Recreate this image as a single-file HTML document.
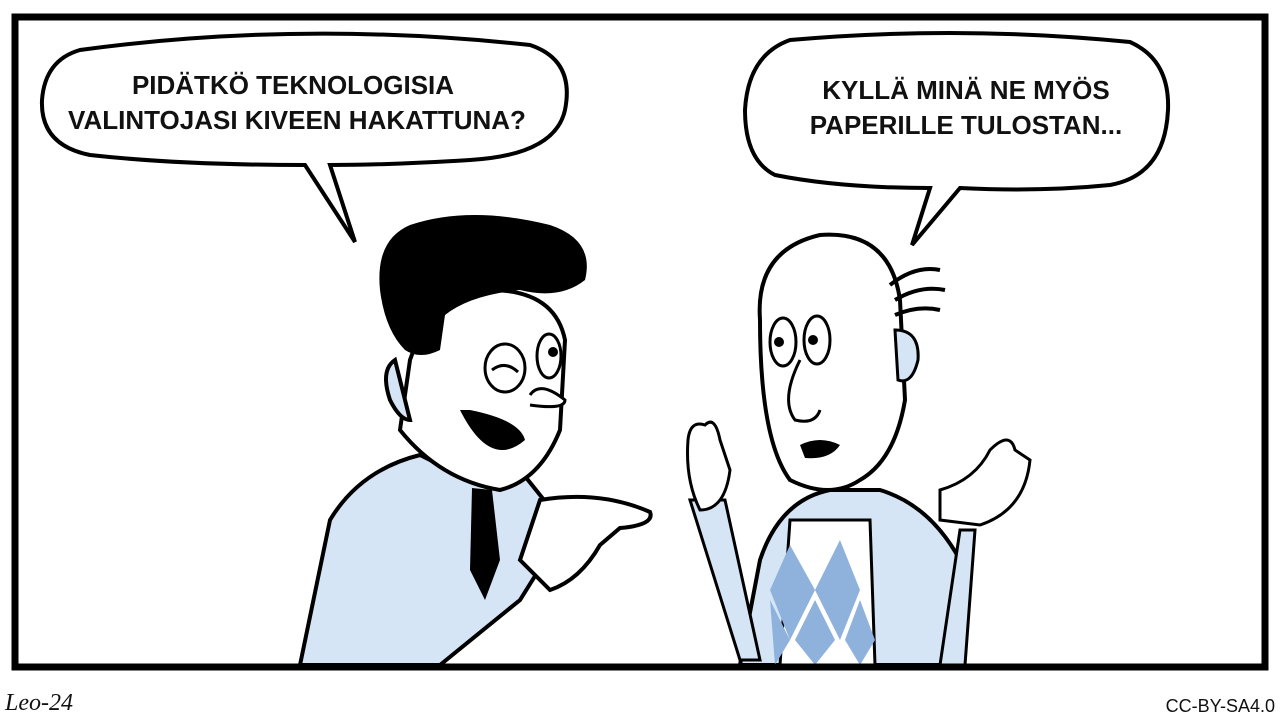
<!DOCTYPE html>
<html><head><meta charset="utf-8"><style>
html,body{margin:0;padding:0;background:#fff;width:1280px;height:720px;overflow:hidden}
svg{display:block}
text{font-family:"Liberation Sans",sans-serif;font-weight:bold;fill:#111}
</style></head><body>
<svg width="1280" height="720" viewBox="0 0 1280 720">
<rect x="0" y="0" width="1280" height="720" fill="#fff"/>
<!-- left character body -->
<path d="M300 665 L330 520 Q360 470 420 455 L470 480 L520 470 L560 520 L545 560 L520 600 L440 665 Z" fill="#d5e5f5" stroke="#000" stroke-width="4"/>
<path d="M540 500 Q600 490 650 512 Q655 525 620 528 L600 545 Q580 580 550 590 L520 560 Z" fill="#fff" stroke="#000" stroke-width="4"/>
<path d="M472 488 L492 490 L500 560 L485 600 L470 570 Z" fill="#000"/>
<path d="M400 430 L410 360 Q430 300 490 290 Q555 290 565 340 L560 430 Q540 480 500 490 Q440 480 400 430 Z" fill="#fff" stroke="#000" stroke-width="4"/>
<path d="M395 360 Q380 370 390 400 Q400 420 410 420 Z" fill="#d5e5f5" stroke="#000" stroke-width="4"/>
<path d="M380 290 Q375 240 410 225 Q470 205 550 225 Q595 240 585 280 Q560 300 520 290 Q470 295 445 315 L440 350 Q420 360 405 350 Q385 330 380 290 Z" fill="#000"/>
<ellipse cx="505" cy="368" rx="20" ry="24" fill="#fff" stroke="#000" stroke-width="3"/>
<ellipse cx="549" cy="356" rx="12" ry="22" fill="#fff" stroke="#000" stroke-width="3"/>
<circle cx="553" cy="352" r="5" fill="#000"/><path d="M492 370 Q505 360 518 372" stroke="#000" stroke-width="3" fill="none"/>
<path d="M460 410 Q490 470 525 440 Q520 420 470 410 Z" fill="#000"/>
<path d="M530 405 Q565 410 565 400 Q540 380 530 395" fill="#fff" stroke="#000" stroke-width="3"/>
<!-- right character -->
<path d="M740 665 L760 560 Q780 500 830 490 L880 490 Q930 505 960 560 L945 665 Z" fill="#d5e5f5" stroke="#000" stroke-width="4"/>
<path d="M790 520 L870 520 L875 665 L780 665 Z" fill="#fff" stroke="#000" stroke-width="3"/>
<path d="M790 545 L815 590 L790 640 L770 590 Z M840 540 L860 590 L840 640 L815 590 Z M815 600 L835 640 L815 665 L795 640 Z M770 600 L790 640 L775 665 Z M860 600 L875 640 L860 665 L845 640 Z" fill="#8eb2db"/>
<path d="M690 500 L740 660 L760 660 L725 500 Z" fill="#d5e5f5" stroke="#000" stroke-width="3"/>
<path d="M960 530 L940 665 L965 665 L975 530 Z" fill="#d5e5f5" stroke="#000" stroke-width="3"/>
<path d="M688 440 Q690 420 705 425 Q715 415 720 440 L730 470 Q725 510 700 510 Q685 480 688 440 Z" fill="#fff" stroke="#000" stroke-width="3"/>
<path d="M940 490 Q975 480 990 450 Q1010 430 1015 450 L1030 460 Q1025 510 980 525 L940 520 Z" fill="#fff" stroke="#000" stroke-width="3"/>
<path d="M760 320 Q755 250 820 235 Q890 230 900 300 L905 400 Q895 460 860 480 Q830 500 790 480 Q760 440 760 320 Z" fill="#fff" stroke="#000" stroke-width="4"/>
<path d="M895 330 Q920 330 918 360 Q912 385 898 380 Z" fill="#d5e5f5" stroke="#000" stroke-width="3"/>
<path d="M890 285 Q915 265 940 270 M895 300 Q920 285 945 290 M895 315 Q918 305 940 310" stroke="#000" stroke-width="4" fill="none"/>
<ellipse cx="783" cy="342" rx="13" ry="24" fill="#fff" stroke="#000" stroke-width="3"/>
<ellipse cx="817" cy="340" rx="13" ry="24" fill="#fff" stroke="#000" stroke-width="3"/>
<circle cx="779" cy="342" r="5" fill="#000"/><circle cx="813" cy="340" r="5" fill="#000"/>
<path d="M800 360 Q780 400 795 420 Q815 425 820 410" stroke="#000" stroke-width="3" fill="none"/>
<path d="M800 445 Q820 435 840 445 Q830 460 805 458 Z" fill="#000"/>
<!-- bubbles -->
<path d="M80 50 Q300 20 530 45 Q575 60 565 110 Q555 155 470 160 Q390 165 330 165 L355 242 L305 165 Q180 165 90 155 Q40 145 42 100 Q45 60 80 50 Z" fill="#fff" stroke="#000" stroke-width="4"/>
<path d="M790 40 Q960 25 1130 42 Q1170 60 1168 110 Q1165 175 1110 185 Q1040 192 960 188 L912 245 L930 188 Q840 188 775 175 Q745 160 745 110 Q748 55 790 40 Z" fill="#fff" stroke="#000" stroke-width="4"/>
<text x="293" y="94" font-size="26" text-anchor="middle">PIDÄTKÖ TEKNOLOGISIA</text>
<text x="297" y="129" font-size="26" text-anchor="middle">VALINTOJASI KIVEEN HAKATTUNA?</text>
<text x="966" y="99" font-size="26" text-anchor="middle">KYLLÄ MINÄ NE MYÖS</text>
<text x="966" y="134" font-size="26" text-anchor="middle">PAPERILLE TULOSTAN...</text>
<!-- frame -->
<rect x="15" y="17" width="1250" height="650" fill="none" stroke="#000" stroke-width="7"/>
<text x="5" y="710" font-size="24" font-weight="normal" font-style="italic" style="font-family:'Liberation Serif',serif;font-weight:normal">Leo-24</text>
<text x="1275" y="712" font-size="18" text-anchor="end" style="font-weight:normal">CC-BY-SA4.0</text>
</svg>
</body></html>
